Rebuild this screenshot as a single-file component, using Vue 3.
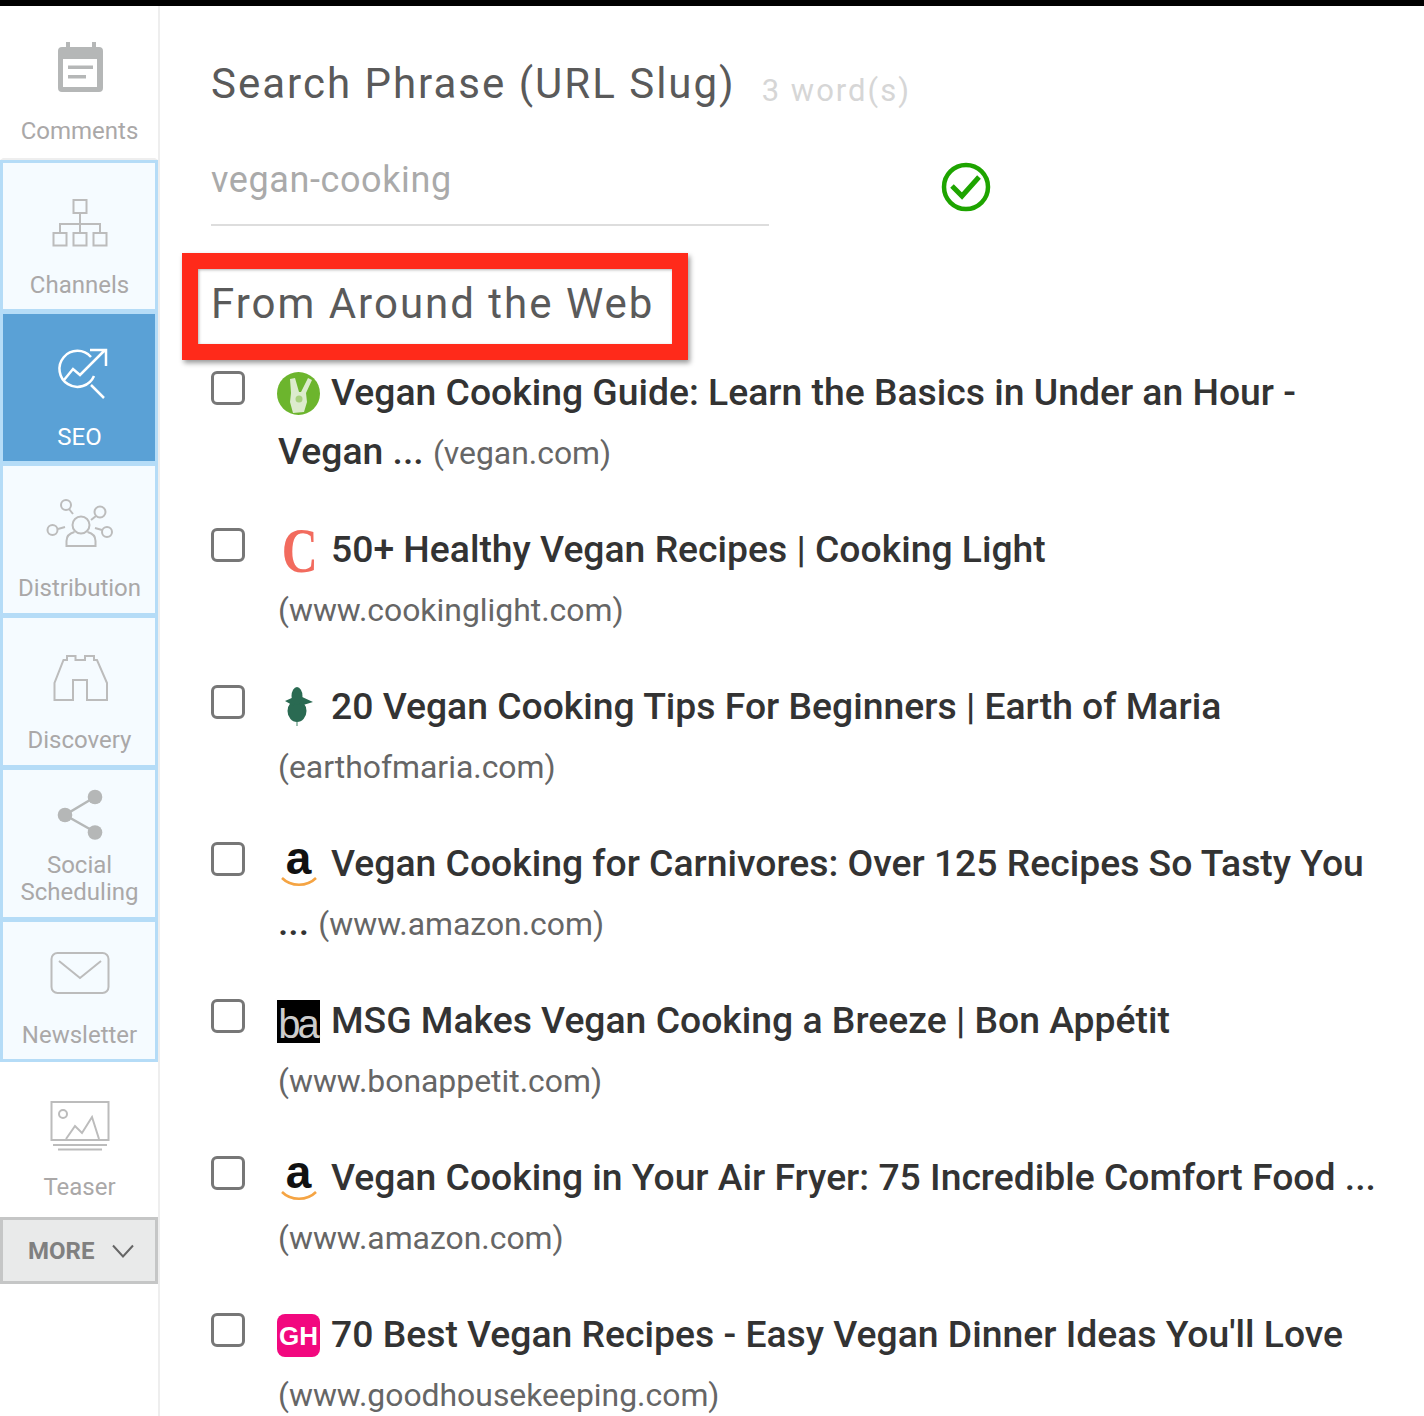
<template>
  <div class="page">
    <div class="topbar"></div>
    <div class="layout">
      <aside class="sidebar">
        <div class="nav-item nav-plain nav-comments">
          <svg class="nav-icon" viewBox="48 38 64 60">
            <path class="fill" d="M66 42h4v5h22v-5h4v5h3a4 4 0 0 1 4 4v37a4 4 0 0 1-4 4H62a4 4 0 0 1-4-4V51a4 4 0 0 1 4-4h4z" />
            <rect x="63" y="59" width="34" height="28" fill="#fff" />
            <rect class="fill" x="68" y="65.500" width="25" height="3.500" />
            <rect class="fill" x="68" y="75" width="18" height="3.500" />
          </svg>
          <span class="nav-label">Comments</span>
        </div>
        <div class="nav-item nav-channels">
          <svg class="nav-icon" viewBox="48 192 64 60">
            <g class="line">
              <rect x="73.500" y="200" width="13" height="13" />
              <rect x="53.500" y="233" width="13" height="12.500" />
              <rect x="73.500" y="233" width="13" height="12.500" />
              <rect x="93.500" y="233" width="13" height="12.500" />
              <path d="M80 213v20M60 233v-9h40v9" />
            </g>
          </svg>
          <span class="nav-label">Channels</span>
        </div>
        <div class="nav-item nav-active">
          <svg class="nav-icon" viewBox="48 343 64 60">
            <g class="line">
              <path d="M91 357a18 18 0 1 0 3 19" />
              <path d="M64 380l9-11 7 6 25-25M90 350h16v16M91 385l13 13" />
            </g>
          </svg>
          <span class="nav-label">SEO</span>
        </div>
        <div class="nav-item nav-low">
          <svg class="nav-icon" viewBox="48 495 64 60">
            <g class="line">
              <circle cx="81" cy="525" r="8.500" />
              <path d="M74.500 532c-4 1-8 4-8 9v5h29v-5c0-5-4-8-8-9" />
              <circle cx="66" cy="505" r="5" />
              <path d="M69 509l4 5" />
              <circle cx="100" cy="512" r="5.500" />
              <path d="M91 520l5-4" />
              <circle cx="52.500" cy="530" r="5" />
              <path d="M58 529l7-2" />
              <circle cx="107" cy="532" r="5" />
              <path d="M95 528l7 2" />
            </g>
          </svg>
          <span class="nav-label">Distribution</span>
        </div>
        <div class="nav-item nav-low">
          <svg class="nav-icon" viewBox="48 647 64 60">
            <path class="line" d="M54.500 700v-17l9-23h3.500v-4h8.500v4h9.500v-4h9v4h3l10 23v17h-20v-20h-14v20z" />
          </svg>
          <span class="nav-label">Discovery</span>
        </div>
        <div class="nav-item nav-low nav-social">
          <svg class="nav-icon" viewBox="48 783 64 60">
            <path d="M95 797L65 815l30 17" fill="none" stroke="#b5b8b8" stroke-width="2.500" />
            <circle class="fill" cx="95" cy="797" r="7.300" />
            <circle class="fill" cx="65" cy="815" r="7.300" />
            <circle class="fill" cx="95" cy="832.500" r="7.300" />
          </svg>
          <span class="nav-label">Social Scheduling</span>
        </div>
        <div class="nav-item nav-newsletter">
          <svg class="nav-icon" viewBox="48 951 64 60">
            <g class="line">
              <rect x="51.500" y="953" width="57" height="40" rx="6" />
              <path d="M59 961l21 17 21-17" />
            </g>
          </svg>
          <span class="nav-label">Newsletter</span>
        </div>
        <div class="nav-item nav-plain nav-teaser">
          <svg class="nav-icon" viewBox="48 1094 64 60">
            <g class="line">
              <rect x="51.500" y="1102" width="57" height="38" />
              <circle cx="63" cy="1114" r="4" />
              <path d="M66 1139l9-13 7 7 10-16 7 22M53 1145h54M58 1149.500h44" />
            </g>
          </svg>
          <span class="nav-label">Teaser</span>
        </div>
        <div class="more">
          <span>MORE</span>
          <svg width="22" height="14" viewBox="0 0 22 14">
            <path d="M1 1.500l10 11 10-11" fill="none" stroke="#666" stroke-width="2" />
          </svg>
        </div>
      </aside>

      <main class="content">
        <div class="heading-row">
          <h2 class="heading">Search Phrase (URL Slug)</h2>
          <span class="word-count">3 word(s)</span>
        </div>
        <div class="slug-row">
          <div class="slug-input">vegan-cooking</div>
          <svg class="slug-ok" width="50" height="50" viewBox="0 0 50 50">
            <circle cx="25" cy="25" r="22" fill="none" stroke="#1ea400" stroke-width="4.500" />
            <path d="M11 24l10 10 17-19" fill="none" stroke="#1ea400" stroke-width="5" />
          </svg>
        </div>
        <div class="web-heading">
          <h2 class="heading">From Around the Web</h2>
          <div class="highlight"></div>
        </div>

        <div v-for="item in results" :key="item.title" class="result">
          <span class="checkbox"></span>
          <div class="result-text">
            <span class="favicon">
              <svg v-if="item.icon === 'vegan'" viewBox="0 0 43 43" width="43" height="43">
                <circle cx="21.500" cy="21.500" r="21.500" fill="#6cb52d" />
                <path d="M13 7l5-1 4 14h2l7-14 4 2-6 13 1 9-3 10-11 1-3-11 1-9z" fill="#dcebcd" />
                <circle cx="22" cy="27" r="3.500" fill="#a9d17f" />
              </svg>
              <span v-else-if="item.icon === 'light'" class="fav-light">C</span>
              <svg v-else-if="item.icon === 'maria'" viewBox="0 0 43 43" width="43" height="43">
                <g fill="#2a6a52">
                  <ellipse cx="20" cy="25" rx="9.500" ry="11" />
                  <ellipse cx="20" cy="10" rx="5.500" ry="9" />
                  <path d="M8 15l9-4v9zM36 16l-13-6v10z" />
                </g>
                <path d="M20 36v4" stroke="#9fc0b2" stroke-width="2" />
              </svg>
              <template v-else-if="item.icon === 'amazon'">
                <span class="fav-amazon">a</span>
                <svg class="smile" viewBox="0 0 38 11" width="38" height="11">
                  <path d="M2 2c9 9 25 9 34 0" fill="none" stroke="#f5a443" stroke-width="2.500" />
                </svg>
              </template>
              <span v-else-if="item.icon === 'ba'" class="fav-ba">ba</span>
              <span v-else class="fav-gh">GH</span>
            </span>
            <span class="result-title">{{ item.title }}</span>
            {{ ' ' }}
            <span class="result-source">({{ item.source }})</span>
          </div>
        </div>
      </main>
    </div>
  </div>
</template>

<script setup>
const results = [
  { icon: 'vegan', title: 'Vegan Cooking Guide: Learn the Basics in Under an Hour - Vegan ...', source: 'vegan.com' },
  { icon: 'light', title: '50+ Healthy Vegan Recipes | Cooking Light', source: 'www.cookinglight.com' },
  { icon: 'maria', title: '20 Vegan Cooking Tips For Beginners | Earth of Maria', source: 'earthofmaria.com' },
  { icon: 'amazon', title: 'Vegan Cooking for Carnivores: Over 125 Recipes So Tasty You ...', source: 'www.amazon.com' },
  { icon: 'ba', title: 'MSG Makes Vegan Cooking a Breeze | Bon Appétit', source: 'www.bonappetit.com' },
  { icon: 'amazon', title: 'Vegan Cooking in Your Air Fryer: 75 Incredible Comfort Food ...', source: 'www.amazon.com' },
  { icon: 'gh', title: "70 Best Vegan Recipes - Easy Vegan Dinner Ideas You'll Love", source: 'www.goodhousekeeping.com' }
]
</script>

<style scoped>
.page {
  height: 1416px;
  overflow: hidden;
  background: #fff;
  font-family: Roboto, "Liberation Sans", sans-serif;
}

.topbar {
  height: 6px;
  background: #000;
}

.layout {
  display: flex;
  height: 1410px;
}

/* left rail */
.sidebar {
  width: 158px;
  flex-shrink: 0;
  box-sizing: content-box;
  border-right: 2px solid #eee;
}

.nav-item {
  box-sizing: border-box;
  height: 152px;
  display: flex;
  flex-direction: column;
  align-items: center;
  padding: 29px 0 10px 1px;
  border: solid #b5dcf7;
  border-width: 3px 3px 2px;
  background: #f5fbff;
}

.nav-plain {
  background: #fff;
  border-color: #fff;
}

.nav-comments {
  height: 154px;
  padding-bottom: 13px;
  border-bottom: 2px solid #eee;
}

.nav-channels {
  height: 151px;
}

.nav-low {
  padding-bottom: 11px;
}

.nav-newsletter {
  height: 143px;
  border-bottom-width: 3px;
}

.nav-teaser {
  height: 155px;
  padding-bottom: 14px;
}

.nav-social {
  padding-top: 13px;
}

.nav-active {
  background: #5aa1d6;
}

.nav-icon {
  width: 64px;
  height: 60px;
  flex-shrink: 0;
  overflow: visible;
}

.nav-label {
  margin-top: auto;
  width: 130px;
  font-size: 24px;
  line-height: 27px;
  text-align: center;
  color: #aaa8a8;
}

.nav-active .nav-label {
  color: #fff;
}

.fill {
  fill: #b5b7b7;
}

.line {
  fill: none;
  stroke: #bcbcbc;
  stroke-width: 2;
}

.nav-active .line {
  stroke: #fff;
  stroke-width: 2.500;
}

.more {
  box-sizing: border-box;
  height: 67px;
  display: flex;
  align-items: center;
  gap: 18px;
  padding-left: 25px;
  border: 3px solid #c5c6c6;
  background: #e9eaea;
  font-size: 24px;
  font-weight: 700;
  color: #808080;
}

/* main column */
.content {
  flex: 1;
  min-width: 0;
  padding: 51px 44px 0 51px;
}

.heading-row {
  display: flex;
  align-items: flex-end;
  gap: 26px;
}

.heading {
  margin: 0;
  font-size: 42px;
  font-weight: 400;
  line-height: 54px;
  letter-spacing: 2px;
  color: #5a5a5a;
}

.word-count {
  font-size: 31px;
  line-height: 40px;
  letter-spacing: 2px;
  color: #d6d6d6;
}

.slug-row {
  display: flex;
  align-items: flex-start;
  margin-top: 45px;
}

.slug-input {
  box-sizing: border-box;
  width: 558px;
  height: 70px;
  border-bottom: 2px solid #ddd;
  font-size: 36px;
  line-height: 48px;
  letter-spacing: 0.600px;
  color: #aaa;
}

.slug-ok {
  margin: 6px 0 0 172px;
}

.web-heading {
  position: relative;
  margin-top: 51px;
}

.highlight {
  position: absolute;
  left: -29px;
  top: -24px;
  width: 506px;
  height: 107px;
  box-sizing: border-box;
  border: 16px solid #ff2a1a;
  box-shadow: 2px 3px 5px rgba(0, 0, 0, 0.4), inset 1px 1px 3px rgba(0, 0, 0, 0.3);
}

.result {
  display: flex;
  gap: 33px;
  height: 157px;
}

.web-heading + .result {
  margin-top: 32px;
}

.checkbox {
  box-sizing: border-box;
  flex-shrink: 0;
  width: 34px;
  height: 34px;
  margin-top: 8px;
  border: 3px solid #777;
  border-radius: 6px;
}

.result-text {
  flex: 1;
  min-width: 0;
  line-height: 59px;
  font-size: 37.300px;
}

.favicon {
  position: relative;
  display: inline-block;
  width: 43px;
  height: 43px;
  margin: 0 11px 4px -1px;
  vertical-align: middle;
  line-height: 43px;
  text-align: center;
}

.favicon svg {
  display: block;
}

.fav-light {
  display: block;
  font-family: "Liberation Serif", serif;
  font-size: 64px;
  font-weight: 700;
  line-height: 44px;
  color: #f26b5e;
  transform: scaleX(0.78);
}

.fav-amazon {
  display: block;
  font-family: "Liberation Sans", sans-serif;
  font-size: 46px;
  font-weight: 700;
  line-height: 30px;
  color: #111;
}

.favicon .smile {
  position: absolute;
  left: 3px;
  top: 33px;
}

.fav-ba {
  display: block;
  height: 43px;
  background: #000;
  font-family: "Liberation Sans", sans-serif;
  font-size: 40px;
  line-height: 48px;
  letter-spacing: -3px;
  text-indent: -2px;
  color: #ccc;
}

.fav-gh {
  display: block;
  height: 43px;
  border-radius: 8px;
  background: #f2087f;
  font-family: "Liberation Sans", sans-serif;
  font-size: 26px;
  font-weight: 700;
  line-height: 44px;
  color: #fff;
}

.result-title {
  font-weight: 500;
  color: #333;
}

.result-source {
  font-size: 31.900px;
  line-height: 1;
  white-space: nowrap;
  color: #666;
}
</style>

<style>
html,
body {
  margin: 0;
  overflow: hidden;
}
</style>
